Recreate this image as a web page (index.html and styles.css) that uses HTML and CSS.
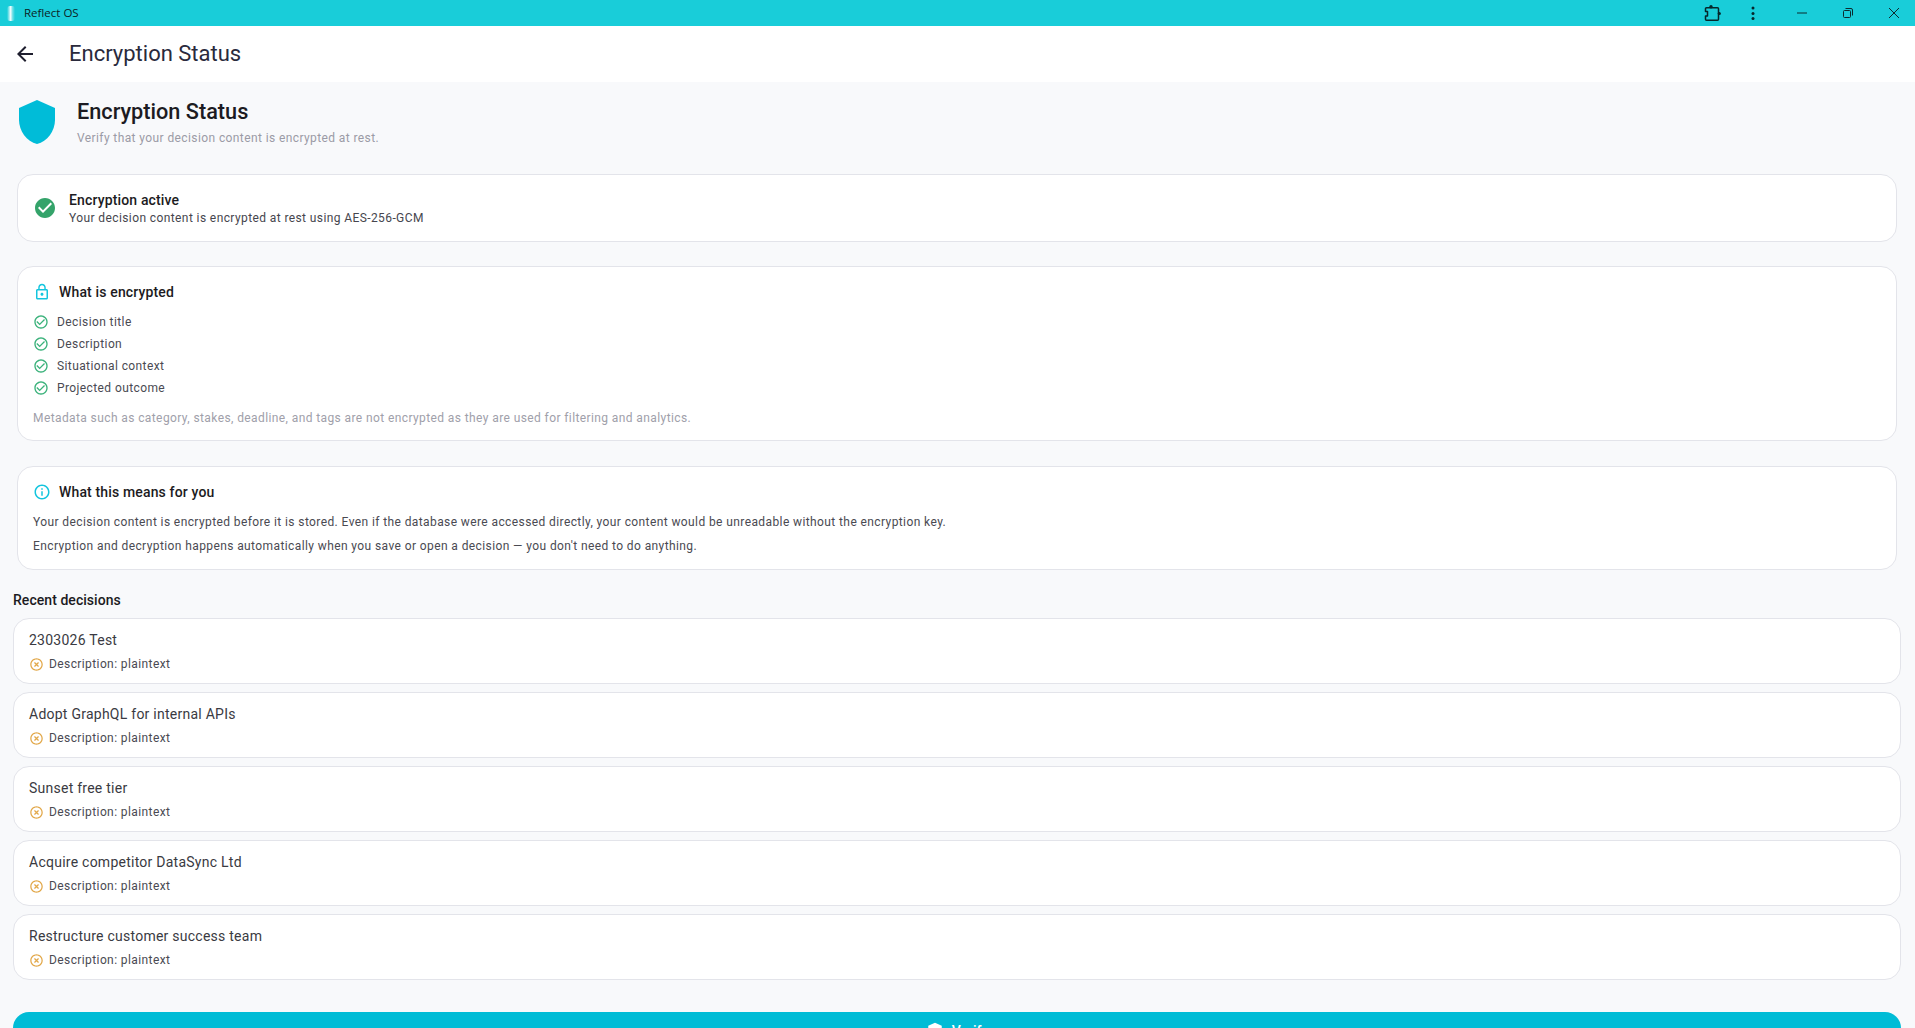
FILE: index.html
```html
<!DOCTYPE html>
<html lang="en">

<head>
    <meta charset="UTF-8">
    <meta name="viewport" content="width=device-width, initial-scale=1.0">
    <title>Reflect OS</title>
    <link rel="stylesheet" href="styles.css">
</head>

<body>
    <!-- Window title bar -->
    <div class="title_bar">
        <span class="app_mark"></span>
        <span class="app_name">Reflect OS</span>
        <div class="title_actions">
            <svg class="puzzle_icon" viewBox="0 0 17 17" width="17" height="17">
                <path d="M2.500 2.750H13.500a1 1 0 0 1 1 1V14.250a1 1 0 0 1-1 1H2.500a1 1 0 0 1-1-1V11H3.500V6.500H1.500V3.750a1 1 0 0 1 1-1z" fill="none" stroke="#06262b" stroke-width="1.500" stroke-linejoin="round" />
                <circle cx="7" cy="1.800" r="1.700" fill="#06262b" />
                <circle cx="15.300" cy="8.500" r="1.600" fill="#06262b" />
            </svg>
            <svg class="dots_icon" viewBox="0 0 4 14" width="4" height="14">
                <circle cx="2" cy="2" r="1.500" fill="#06262b" />
                <circle cx="2" cy="7.500" r="1.500" fill="#06262b" />
                <circle cx="2" cy="12.500" r="1.500" fill="#06262b" />
            </svg>
            <div class="win_button">
                <svg viewBox="0 0 10 10" width="10" height="10"><path d="M0 5H10" stroke="#0c2a2e" stroke-width="1" /></svg>
            </div>
            <div class="win_button">
                <svg viewBox="0 0 10 10" width="10" height="10">
                    <rect x="0.500" y="2.500" width="7" height="7" rx="1" fill="none" stroke="#0c2a2e" />
                    <path d="M2.500 0.500H8a1.500 1.500 0 0 1 1.500 1.500V7.500" fill="none" stroke="#0c2a2e" />
                </svg>
            </div>
            <div class="win_button">
                <svg viewBox="0 0 10 10" width="10" height="10"><path d="M0 0L10 10M10 0L0 10" stroke="#0c2a2e" stroke-width="1" /></svg>
            </div>
        </div>
    </div>

    <!-- App bar -->
    <div class="app_bar">
        <svg class="back_icon" viewBox="0 0 24 24" width="24" height="24">
            <path d="M20 11H7.830l5.590-5.590L12 4l-8 8 8 8 1.410-1.410L7.830 13H20v-2z" />
        </svg>
        <h1 class="app_bar_title">Encryption Status</h1>
    </div>

    <div class="page_div">
        <!-- Heading -->
        <div class="page_head">
            <svg class="shield_icon" viewBox="0 0 24 24" width="48" height="48">
                <path d="M12 1L3 5v6c0 5.550 3.840 10.740 9 12 5.160-1.260 9-6.450 9-12V5l-9-4z" />
            </svg>
            <div>
                <h2 class="page_title">Encryption Status</h2>
                <p class="page_sub">Verify that your decision content is encrypted at rest.</p>
            </div>
        </div>

        <div class="card status_card">
            <svg class="status_icon" viewBox="0 0 24 24" width="24" height="24">
                <path d="M12 2C6.480 2 2 6.480 2 12s4.480 10 10 10 10-4.480 10-10S17.520 2 12 2zm-2 15l-5-5 1.410-1.410L10 14.170l7.590-7.590L19 8l-9 9z" />
            </svg>
            <div class="status_text">
                <div class="status_title">Encryption active</div>
                <div class="status_sub">Your decision content is encrypted at rest using AES-256-GCM</div>
            </div>
        </div>

        <div class="card info_card encrypted_card">
            <div class="card_head">
                <svg class="teal_icon" viewBox="0 0 24 24" width="18" height="18">
                    <path d="M12 17c1.100 0 2-.9 2-2s-.9-2-2-2-2 .9-2 2 .9 2 2 2zm6-9h-1V6c0-2.760-2.240-5-5-5S7 3.240 7 6v2H6c-1.100 0-2 .9-2 2v10c0 1.100.9 2 2 2h12c1.100 0 2-.9 2-2V10c0-1.100-.9-2-2-2zM8.900 6c0-1.710 1.390-3.100 3.100-3.100s3.100 1.390 3.100 3.100v2H8.900V6zM18 20H6V10h12v10z" />
                </svg>
                <span>What is encrypted</span>
            </div>
            <div class="check_row">
                <svg class="green_icon" viewBox="0 0 24 24" width="16" height="16"><path d="M16.590 7.580L10 14.170l-3.590-3.580L5 12l5 5 8-8zM12 2C6.480 2 2 6.480 2 12s4.480 10 10 10 10-4.480 10-10S17.520 2 12 2zm0 18c-4.420 0-8-3.580-8-8s3.580-8 8-8 8 3.580 8 8-3.580 8-8 8z" /></svg>
                <span>Decision title</span>
            </div>
            <div class="check_row">
                <svg class="green_icon" viewBox="0 0 24 24" width="16" height="16"><path d="M16.590 7.580L10 14.170l-3.590-3.580L5 12l5 5 8-8zM12 2C6.480 2 2 6.480 2 12s4.480 10 10 10 10-4.480 10-10S17.520 2 12 2zm0 18c-4.420 0-8-3.580-8-8s3.580-8 8-8 8 3.580 8 8-3.580 8-8 8z" /></svg>
                <span>Description</span>
            </div>
            <div class="check_row">
                <svg class="green_icon" viewBox="0 0 24 24" width="16" height="16"><path d="M16.590 7.580L10 14.170l-3.590-3.580L5 12l5 5 8-8zM12 2C6.480 2 2 6.480 2 12s4.480 10 10 10 10-4.480 10-10S17.520 2 12 2zm0 18c-4.420 0-8-3.580-8-8s3.580-8 8-8 8 3.580 8 8-3.580 8-8 8z" /></svg>
                <span>Situational context</span>
            </div>
            <div class="check_row">
                <svg class="green_icon" viewBox="0 0 24 24" width="16" height="16"><path d="M16.590 7.580L10 14.170l-3.590-3.580L5 12l5 5 8-8zM12 2C6.480 2 2 6.480 2 12s4.480 10 10 10 10-4.480 10-10S17.520 2 12 2zm0 18c-4.420 0-8-3.580-8-8s3.580-8 8-8 8 3.580 8 8-3.580 8-8 8z" /></svg>
                <span>Projected outcome</span>
            </div>
            <p class="meta_note">Metadata such as category, stakes, deadline, and tags are not encrypted as they are used for filtering and analytics.</p>
        </div>

        <div class="card info_card means_card">
            <div class="card_head">
                <svg class="teal_icon" viewBox="0 0 24 24" width="18" height="18">
                    <path d="M11 7h2v2h-2zm0 4h2v6h-2zm1-9C6.480 2 2 6.480 2 12s4.480 10 10 10 10-4.480 10-10S17.520 2 12 2zm0 18c-4.410 0-8-3.590-8-8s3.590-8 8-8 8 3.590 8 8-3.590 8-8 8z" />
                </svg>
                <span>What this means for you</span>
            </div>
            <p class="means_line">Your decision content is encrypted before it is stored. Even if the database were accessed directly, your content would be unreadable without the encryption key.</p>
            <p class="means_line">Encryption and decryption happens automatically when you save or open a decision — you don't need to do anything.</p>
        </div>

        <h3 class="section_label">Recent decisions</h3>

        <div class="decision_list">
            <div class="decision_row">
                <div class="decision_title">2303026 Test</div>
                <div class="decision_state">
                    <svg class="warn_icon" viewBox="0 0 24 24" width="15" height="15"><path d="M14.590 8L12 10.590 9.410 8 8 9.410 10.590 12 8 14.590 9.410 16 12 13.410 14.590 16 16 14.590 13.410 12 16 9.410 14.590 8zM12 2C6.470 2 2 6.470 2 12s4.470 10 10 10 10-4.470 10-10S17.530 2 12 2zm0 18c-4.410 0-8-3.590-8-8s3.590-8 8-8 8 3.590 8 8-3.590 8-8 8z" /></svg>
                    <span>Description: plaintext</span>
                </div>
            </div>
            <div class="decision_row">
                <div class="decision_title">Adopt GraphQL for internal APIs</div>
                <div class="decision_state">
                    <svg class="warn_icon" viewBox="0 0 24 24" width="15" height="15"><path d="M14.590 8L12 10.590 9.410 8 8 9.410 10.590 12 8 14.590 9.410 16 12 13.410 14.590 16 16 14.590 13.410 12 16 9.410 14.590 8zM12 2C6.470 2 2 6.470 2 12s4.470 10 10 10 10-4.470 10-10S17.530 2 12 2zm0 18c-4.410 0-8-3.590-8-8s3.590-8 8-8 8 3.590 8 8-3.590 8-8 8z" /></svg>
                    <span>Description: plaintext</span>
                </div>
            </div>
            <div class="decision_row">
                <div class="decision_title">Sunset free tier</div>
                <div class="decision_state">
                    <svg class="warn_icon" viewBox="0 0 24 24" width="15" height="15"><path d="M14.590 8L12 10.590 9.410 8 8 9.410 10.590 12 8 14.590 9.410 16 12 13.410 14.590 16 16 14.590 13.410 12 16 9.410 14.590 8zM12 2C6.470 2 2 6.470 2 12s4.470 10 10 10 10-4.470 10-10S17.530 2 12 2zm0 18c-4.410 0-8-3.590-8-8s3.590-8 8-8 8 3.590 8 8-3.590 8-8 8z" /></svg>
                    <span>Description: plaintext</span>
                </div>
            </div>
            <div class="decision_row">
                <div class="decision_title">Acquire competitor DataSync Ltd</div>
                <div class="decision_state">
                    <svg class="warn_icon" viewBox="0 0 24 24" width="15" height="15"><path d="M14.590 8L12 10.590 9.410 8 8 9.410 10.590 12 8 14.590 9.410 16 12 13.410 14.590 16 16 14.590 13.410 12 16 9.410 14.590 8zM12 2C6.470 2 2 6.470 2 12s4.470 10 10 10 10-4.470 10-10S17.530 2 12 2zm0 18c-4.410 0-8-3.590-8-8s3.590-8 8-8 8 3.590 8 8-3.590 8-8 8z" /></svg>
                    <span>Description: plaintext</span>
                </div>
            </div>
            <div class="decision_row">
                <div class="decision_title">Restructure customer success team</div>
                <div class="decision_state">
                    <svg class="warn_icon" viewBox="0 0 24 24" width="15" height="15"><path d="M14.590 8L12 10.590 9.410 8 8 9.410 10.590 12 8 14.590 9.410 16 12 13.410 14.590 16 16 14.590 13.410 12 16 9.410 14.590 8zM12 2C6.470 2 2 6.470 2 12s4.470 10 10 10 10-4.470 10-10S17.530 2 12 2zm0 18c-4.410 0-8-3.590-8-8s3.590-8 8-8 8 3.590 8 8-3.590 8-8 8z" /></svg>
                    <span>Description: plaintext</span>
                </div>
            </div>
        </div>

        <button class="verify_button" type="button">
            <svg viewBox="0 0 24 24" width="18" height="18" fill="#fff">
                <path d="M12 1L3 5v6c0 5.550 3.840 10.740 9 12 5.160-1.260 9-6.450 9-12V5l-9-4z" />
            </svg>
            <span>Verify</span>
        </button>
    </div>
</body>

</html>
```
FILE: styles.css
```css
* {
    box-sizing: border-box;
}

html,
body {
    height: 100%;
    margin: 0;
    overflow: hidden;
}

body {
    font-family: Roboto, "Liberation Sans", sans-serif;
    background-color: #f8f9fb;
    color: #1c1b22;
}

h1,
h2,
h3,
p {
    margin: 0;
    font-weight: 400;
}

/* Window title bar */
.title_bar {
    display: flex;
    align-items: center;
    height: 26px;
    padding-left: 7px;
    background-color: #19cdd9;
}

.app_mark {
    width: 8px;
    height: 15px;
    border-radius: 3px;
    background: linear-gradient(90deg, #19cdd9, #f2fcfd 45%, #6fe0e7 70%, #19cdd9);
}

.app_name {
    margin-top: -2px;
    margin-left: 9px;
    font-family: "Open Sans", sans-serif;
    font-size: 11.500px;
    color: #0b2326;
}

.title_actions {
    display: flex;
    align-items: center;
    margin-left: auto;
    margin-right: -2px;
}

.puzzle_icon {
    margin-right: 30px;
}

.dots_icon {
    margin-right: 24px;
}

.win_button {
    display: flex;
    justify-content: center;
    align-items: center;
    width: 46px;
    height: 26px;
}

/* App bar */
.app_bar {
    display: flex;
    align-items: center;
    height: 56px;
    padding-left: 13px;
    background-color: #ffffff;
}

.back_icon {
    fill: #1e1e2e;
}

.app_bar_title {
    margin-top: -1px;
    margin-left: 32px;
    font-size: 22px;
    color: #2a2a3c;
}

/* Page */
.page_div {
    padding: 16px 14px 0 13px;
}

.page_head {
    display: flex;
    margin-bottom: 27px;
}

.shield_icon {
    flex: none;
    fill: #00bcd8;
}

.page_title {
    margin-left: 16px;
    font-size: 21.700px;
    line-height: 28px;
    font-weight: 500;
    color: #1c1b22;
}

.page_sub {
    margin-top: 3px;
    margin-left: 16px;
    font-size: 12px;
    line-height: 18px;
    letter-spacing: 0.4px;
    color: #9b9ba6;
}

.card {
    margin: 0 4px 25px 4px;
    border: 1px solid #e3e4ea;
    border-radius: 16px;
    background-color: #ffffff;
}

.status_card {
    display: flex;
    align-items: center;
    height: 68px;
    margin-bottom: 24px;
    padding: 0 15px;
}

.status_icon {
    flex: none;
    margin-right: 12px;
    fill: #34a36a;
}

.status_text {
    padding-top: 2px;
}

.status_title {
    font-size: 14px;
    line-height: 18px;
    font-weight: 500;
    letter-spacing: 0.15px;
    color: #1c1b22;
}

.status_sub {
    font-size: 12px;
    line-height: 18px;
    letter-spacing: 0.4px;
    color: #46464e;
}

.info_card {
    padding: 15px 16px 0 15px;
}

.encrypted_card {
    height: 175px;
}

.means_card {
    height: 104px;
    margin-bottom: 21px;
}

.card_head {
    display: flex;
    align-items: center;
    height: 20px;
    margin-bottom: 9px;
    font-size: 14px;
    font-weight: 500;
    letter-spacing: 0.15px;
    color: #1c1b22;
}

.means_card .card_head {
    margin-bottom: 8px;
}

.card_head svg {
    margin-right: 8px;
}

.teal_icon {
    fill: #14c5de;
}

.check_row {
    display: flex;
    align-items: center;
    height: 22px;
    font-size: 12px;
    letter-spacing: 0.4px;
    color: #4a4a52;
}

.check_row svg {
    margin-right: 8px;
}

.green_icon {
    fill: #3bb27b;
}

.meta_note {
    margin-top: 10px;
    font-size: 12px;
    line-height: 18px;
    letter-spacing: 0.4px;
    color: #a0a0aa;
}

.means_line {
    font-size: 12px;
    line-height: 24px;
    letter-spacing: 0.4px;
    color: #4a4a52;
}

.section_label {
    margin-bottom: 9px;
    font-size: 14px;
    line-height: 18px;
    font-weight: 500;
    letter-spacing: 0.05px;
    color: #1c1b22;
}

.decision_list {
    display: flex;
    flex-direction: column;
    gap: 8px;
}

.decision_row {
    height: 66px;
    padding: 11px 15px 0 15px;
    border: 1px solid #e3e4ea;
    border-radius: 16px;
    background-color: #ffffff;
}

.decision_title {
    font-size: 14px;
    line-height: 20px;
    letter-spacing: 0.25px;
    color: #3a3a42;
}

.decision_state {
    display: flex;
    align-items: center;
    height: 18px;
    margin-top: 5px;
    font-size: 12px;
    letter-spacing: 0.4px;
    color: #4a4a52;
}

.decision_state svg {
    margin-right: 5px;
}

.warn_icon {
    fill: #e2a84a;
}

.verify_button {
    display: flex;
    justify-content: center;
    align-items: center;
    gap: 8px;
    width: 100%;
    height: 38px;
    margin-top: 32px;
    border: none;
    border-radius: 16px;
    background-color: #00bcd6;
    color: #ffffff;
    font-family: Roboto, sans-serif;
    font-size: 14px;
    font-weight: 500;
}
```
